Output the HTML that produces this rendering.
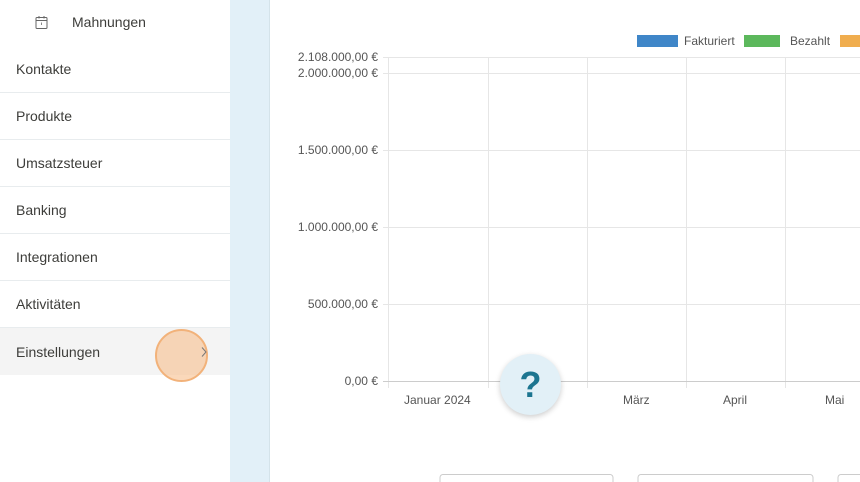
<!DOCTYPE html>
<html><head><meta charset="utf-8"><style>
*{margin:0;padding:0;box-sizing:border-box}
body{width:860px;height:482px;overflow:hidden;background:#fff;font-family:"Liberation Sans",sans-serif;position:relative}
.side{position:absolute;left:0;top:0;width:230px;height:482px;background:#fff}
.item{position:absolute;left:0;width:230px;height:47px;border-bottom:1px solid #e8ecee;font-size:14px;color:#3d3d3a;padding-left:16px;line-height:46px}
.strip{position:absolute;left:230px;top:0;width:40px;height:482px;background:#e2f0f8;border-right:1px solid #d4e3ea}
.t{position:absolute;font-size:12px;color:#555;white-space:nowrap}
.y{position:absolute;right:482px;font-size:12px;color:#555;white-space:nowrap}
</style></head><body>
<div class="side">
 <svg style="position:absolute;left:35px;top:15px" width="13" height="15" viewBox="0 0 13 15"><rect x="1" y="2.5" width="11" height="11" rx="1" fill="none" stroke="#666" stroke-width="1"/><line x1="1" y1="5.5" x2="12" y2="5.5" stroke="#666"/><line x1="4" y1="1" x2="4" y2="3.5" stroke="#666"/><line x1="9" y1="1" x2="9" y2="3.5" stroke="#666"/><line x1="6.5" y1="7.5" x2="6.5" y2="10" stroke="#888"/></svg>
 <div style="position:absolute;left:72px;top:14px;font-size:14px;color:#3d3d3a">Mahnungen</div>
 <div class="item" style="top:46px">Kontakte</div>
 <div class="item" style="top:93px">Produkte</div>
 <div class="item" style="top:140px">Umsatzsteuer</div>
 <div class="item" style="top:187px">Banking</div>
 <div class="item" style="top:234px">Integrationen</div>
 <div class="item" style="top:281px">Aktivitäten</div>
 <div class="item" style="top:328px;background:#f4f4f4;border:none;line-height:48px">Einstellungen</div>
 <div style="position:absolute;left:155px;top:329px;width:53px;height:53px;border-radius:50%;background:rgba(246,190,140,0.6);border:2px solid #f2b27a"></div>
 <svg style="position:absolute;left:200px;top:346px" width="8" height="12"><path d="M2 1.5 L6 6 L2 10.5" fill="none" stroke="#777" stroke-width="1"/></svg>
</div>
<div class="strip"></div>
<svg style="position:absolute;left:270px;top:0" width="590" height="482">
 <g stroke="#e6e6e6" stroke-width="1">
  <line x1="113" y1="57.5" x2="590" y2="57.5"/><line x1="113" y1="73.5" x2="590" y2="73.5"/>
  <line x1="113" y1="150.5" x2="590" y2="150.5"/><line x1="113" y1="227.5" x2="590" y2="227.5"/>
  <line x1="113" y1="304.5" x2="590" y2="304.5"/>
  <line x1="118.5" y1="57" x2="118.5" y2="388"/><line x1="218.5" y1="57" x2="218.5" y2="388"/>
  <line x1="317.5" y1="57" x2="317.5" y2="388"/><line x1="416.5" y1="57" x2="416.5" y2="388"/>
  <line x1="515.5" y1="57" x2="515.5" y2="388"/>
 </g>
 <line x1="113" y1="381.5" x2="590" y2="381.5" stroke="#ccc"/>
 <rect x="367" y="35" width="41" height="12" fill="#3f86c8"/>
 <rect x="474" y="35" width="36" height="12" fill="#5cb85c"/>
 <rect x="570" y="35" width="20" height="12" fill="#f0ad4e"/>
 <rect x="170" y="474.5" width="173" height="12" rx="3" fill="#fff" stroke="#ccc"/>
 <rect x="368" y="474.5" width="175" height="12" rx="3" fill="#fff" stroke="#ccc"/>
 <rect x="568" y="474.5" width="30" height="12" rx="3" fill="#fff" stroke="#ccc"/>
</svg>
<div class="t" style="left:684px;top:34px">Fakturiert</div>
<div class="t" style="left:790px;top:34px">Bezahlt</div>
<div class="y" style="top:50px">2.108.000,00 €</div>
<div class="y" style="top:66px">2.000.000,00 €</div>
<div class="y" style="top:143px">1.500.000,00 €</div>
<div class="y" style="top:220px">1.000.000,00 €</div>
<div class="y" style="top:297px">500.000,00 €</div>
<div class="y" style="top:374px">0,00 €</div>
<div class="t" style="left:404px;top:393px">Januar 2024</div>
<div class="t" style="left:623px;top:393px">März</div>
<div class="t" style="left:723px;top:393px">April</div>
<div class="t" style="left:825px;top:393px">Mai</div>
<div style="position:absolute;left:500px;top:354px;width:61px;height:61px;border-radius:50%;background:#e2f0f7;box-shadow:0 2px 6px rgba(0,0,0,0.2);text-align:center;line-height:61px;font-size:36px;font-weight:bold;color:#1c7590">?</div>
</body></html>
